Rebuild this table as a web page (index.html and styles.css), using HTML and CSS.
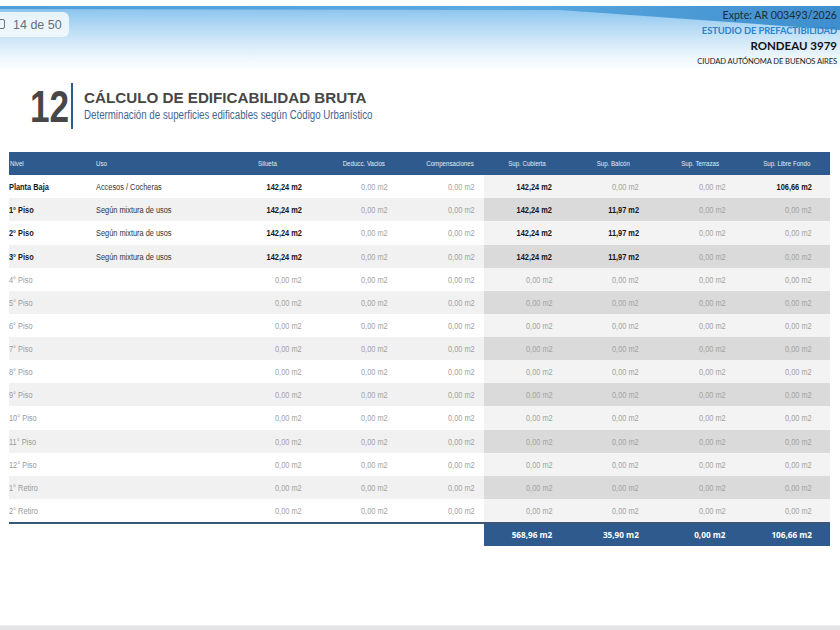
FILE: index.html
```html
<!DOCTYPE html>
<html lang="es">
<head>
<meta charset="utf-8">
<title>Cálculo de edificabilidad bruta</title>
<link rel="stylesheet" href="styles.css">
</head>
<body>
<div class="page">
  <header class="banner">
    <svg class="stripe" width="840" height="40" viewBox="0 0 840 40" aria-hidden="true">
      <defs>
        <linearGradient id="sg" x1="0" y1="0" x2="1" y2="0">
          <stop offset="0" stop-color="#4f9fd9"/>
          <stop offset="0.6" stop-color="#5aa8de"/>
          <stop offset="1" stop-color="#3f8fcf"/>
        </linearGradient>
      </defs>
      <polygon points="0,6 840,6 840,30 560,10 0,9" fill="url(#sg)"/>
    </svg>
    <div class="counter"><span class="counter-ico"></span>14 de 50</div>
    <div class="meta">
      <div class="expte">Expte: AR 003493/2026</div>
      <div class="estudio">ESTUDIO DE PREFACTIBILIDAD</div>
      <div class="addr">RONDEAU 3979</div>
      <div class="city">CIUDAD AUTÓNOMA DE BUENOS AIRES</div>
    </div>
  </header>

  <section class="title">
    <div class="num"><span>12</span></div>
    <div class="title-text">
      <h1>CÁLCULO DE EDIFICABILIDAD BRUTA</h1>
      <p><span>Determinación de superficies edificables según Código Urbanístico</span></p>
    </div>
  </section>

  <section class="table">
    <div class="row head">
      <div class="c l first"><span>Nivel</span></div>
      <div class="c l uso"><span>Uso</span></div>
      <div class="c h"><span>Silueta</span></div>
      <div class="c h sh"><span>Deducc. Vacios</span></div>
      <div class="c h sh"><span>Compensaciones</span></div>
      <div class="c h"><span>Sup. Cubierta</span></div>
      <div class="c h"><span>Sup. Balcón</span></div>
      <div class="c h"><span>Sup. Terrazas</span></div>
      <div class="c h"><span>Sup. Libre Fondo</span></div>
    </div>

    <div class="row">
      <div class="c l first b"><span>Planta Baja</span></div>
      <div class="c l uso"><span>Accesos / Cocheras</span></div>
      <div class="c v b"><span>142,24 m2</span></div>
      <div class="c v"><span>0,00 m2</span></div>
      <div class="c v"><span>0,00 m2</span></div>
      <div class="c v s b"><span>142,24 m2</span></div>
      <div class="c v s"><span>0,00 m2</span></div>
      <div class="c v s"><span>0,00 m2</span></div>
      <div class="c v s b"><span>106,66 m2</span></div>
    </div>
    <div class="row">
      <div class="c l first b"><span>1° Piso</span></div>
      <div class="c l uso"><span>Según mixtura de usos</span></div>
      <div class="c v b"><span>142,24 m2</span></div>
      <div class="c v"><span>0,00 m2</span></div>
      <div class="c v"><span>0,00 m2</span></div>
      <div class="c v s b"><span>142,24 m2</span></div>
      <div class="c v s b"><span>11,97 m2</span></div>
      <div class="c v s"><span>0,00 m2</span></div>
      <div class="c v s"><span>0,00 m2</span></div>
    </div>
    <div class="row">
      <div class="c l first b"><span>2° Piso</span></div>
      <div class="c l uso"><span>Según mixtura de usos</span></div>
      <div class="c v b"><span>142,24 m2</span></div>
      <div class="c v"><span>0,00 m2</span></div>
      <div class="c v"><span>0,00 m2</span></div>
      <div class="c v s b"><span>142,24 m2</span></div>
      <div class="c v s b"><span>11,97 m2</span></div>
      <div class="c v s"><span>0,00 m2</span></div>
      <div class="c v s"><span>0,00 m2</span></div>
    </div>
    <div class="row">
      <div class="c l first b"><span>3° Piso</span></div>
      <div class="c l uso"><span>Según mixtura de usos</span></div>
      <div class="c v b"><span>142,24 m2</span></div>
      <div class="c v"><span>0,00 m2</span></div>
      <div class="c v"><span>0,00 m2</span></div>
      <div class="c v s b"><span>142,24 m2</span></div>
      <div class="c v s b"><span>11,97 m2</span></div>
      <div class="c v s"><span>0,00 m2</span></div>
      <div class="c v s"><span>0,00 m2</span></div>
    </div>
    <div class="row">
      <div class="c l first m"><span>4° Piso</span></div><div class="c l uso"></div>
      <div class="c v"><span>0,00 m2</span></div><div class="c v"><span>0,00 m2</span></div><div class="c v"><span>0,00 m2</span></div>
      <div class="c v s"><span>0,00 m2</span></div><div class="c v s"><span>0,00 m2</span></div><div class="c v s"><span>0,00 m2</span></div><div class="c v s"><span>0,00 m2</span></div>
    </div>
    <div class="row">
      <div class="c l first m"><span>5° Piso</span></div><div class="c l uso"></div>
      <div class="c v"><span>0,00 m2</span></div><div class="c v"><span>0,00 m2</span></div><div class="c v"><span>0,00 m2</span></div>
      <div class="c v s"><span>0,00 m2</span></div><div class="c v s"><span>0,00 m2</span></div><div class="c v s"><span>0,00 m2</span></div><div class="c v s"><span>0,00 m2</span></div>
    </div>
    <div class="row">
      <div class="c l first m"><span>6° Piso</span></div><div class="c l uso"></div>
      <div class="c v"><span>0,00 m2</span></div><div class="c v"><span>0,00 m2</span></div><div class="c v"><span>0,00 m2</span></div>
      <div class="c v s"><span>0,00 m2</span></div><div class="c v s"><span>0,00 m2</span></div><div class="c v s"><span>0,00 m2</span></div><div class="c v s"><span>0,00 m2</span></div>
    </div>
    <div class="row">
      <div class="c l first m"><span>7° Piso</span></div><div class="c l uso"></div>
      <div class="c v"><span>0,00 m2</span></div><div class="c v"><span>0,00 m2</span></div><div class="c v"><span>0,00 m2</span></div>
      <div class="c v s"><span>0,00 m2</span></div><div class="c v s"><span>0,00 m2</span></div><div class="c v s"><span>0,00 m2</span></div><div class="c v s"><span>0,00 m2</span></div>
    </div>
    <div class="row">
      <div class="c l first m"><span>8° Piso</span></div><div class="c l uso"></div>
      <div class="c v"><span>0,00 m2</span></div><div class="c v"><span>0,00 m2</span></div><div class="c v"><span>0,00 m2</span></div>
      <div class="c v s"><span>0,00 m2</span></div><div class="c v s"><span>0,00 m2</span></div><div class="c v s"><span>0,00 m2</span></div><div class="c v s"><span>0,00 m2</span></div>
    </div>
    <div class="row">
      <div class="c l first m"><span>9° Piso</span></div><div class="c l uso"></div>
      <div class="c v"><span>0,00 m2</span></div><div class="c v"><span>0,00 m2</span></div><div class="c v"><span>0,00 m2</span></div>
      <div class="c v s"><span>0,00 m2</span></div><div class="c v s"><span>0,00 m2</span></div><div class="c v s"><span>0,00 m2</span></div><div class="c v s"><span>0,00 m2</span></div>
    </div>
    <div class="row">
      <div class="c l first m"><span>10° Piso</span></div><div class="c l uso"></div>
      <div class="c v"><span>0,00 m2</span></div><div class="c v"><span>0,00 m2</span></div><div class="c v"><span>0,00 m2</span></div>
      <div class="c v s"><span>0,00 m2</span></div><div class="c v s"><span>0,00 m2</span></div><div class="c v s"><span>0,00 m2</span></div><div class="c v s"><span>0,00 m2</span></div>
    </div>
    <div class="row">
      <div class="c l first m"><span>11° Piso</span></div><div class="c l uso"></div>
      <div class="c v"><span>0,00 m2</span></div><div class="c v"><span>0,00 m2</span></div><div class="c v"><span>0,00 m2</span></div>
      <div class="c v s"><span>0,00 m2</span></div><div class="c v s"><span>0,00 m2</span></div><div class="c v s"><span>0,00 m2</span></div><div class="c v s"><span>0,00 m2</span></div>
    </div>
    <div class="row">
      <div class="c l first m"><span>12° Piso</span></div><div class="c l uso"></div>
      <div class="c v"><span>0,00 m2</span></div><div class="c v"><span>0,00 m2</span></div><div class="c v"><span>0,00 m2</span></div>
      <div class="c v s"><span>0,00 m2</span></div><div class="c v s"><span>0,00 m2</span></div><div class="c v s"><span>0,00 m2</span></div><div class="c v s"><span>0,00 m2</span></div>
    </div>
    <div class="row">
      <div class="c l first m"><span>1° Retiro</span></div><div class="c l uso"></div>
      <div class="c v"><span>0,00 m2</span></div><div class="c v"><span>0,00 m2</span></div><div class="c v"><span>0,00 m2</span></div>
      <div class="c v s"><span>0,00 m2</span></div><div class="c v s"><span>0,00 m2</span></div><div class="c v s"><span>0,00 m2</span></div><div class="c v s"><span>0,00 m2</span></div>
    </div>
    <div class="row last">
      <div class="c l first m"><span>2° Retiro</span></div><div class="c l uso"></div>
      <div class="c v"><span>0,00 m2</span></div><div class="c v"><span>0,00 m2</span></div><div class="c v"><span>0,00 m2</span></div>
      <div class="c v s"><span>0,00 m2</span></div><div class="c v s"><span>0,00 m2</span></div><div class="c v s"><span>0,00 m2</span></div><div class="c v s"><span>0,00 m2</span></div>
    </div>

    <div class="row total">
      <div class="c blank"></div><div class="c blank"></div><div class="c blank"></div><div class="c blank"></div><div class="c blank"></div>
      <div class="c t">568,96 m2</div>
      <div class="c t">35,90 m2</div>
      <div class="c t">0,00 m2</div>
      <div class="c t">106,66 m2</div>
    </div>
  </section>

  <div class="spacer"></div>
  <footer class="bottom-bar"></footer>
</div>
</body>
</html>
```

FILE: styles.css
```css
* { box-sizing: border-box; }
html, body { margin: 0; padding: 0; background: #fff; }
body { width: 840px; height: 630px; overflow: hidden; font-family: "Liberation Sans", Arial, sans-serif; }

.page { display: flex; flex-direction: column; height: 630px; }

.banner {
  position: relative;
  height: 72px;
  background: linear-gradient(to bottom, #ffffff 0, #ffffff 6px, #8cc5ee 9px, #a9d4f3 22px, #cfe7f8 40px, #eef7fd 58px, #ffffff 72px);
  display: flex;
  justify-content: flex-end;
}
.stripe { position: absolute; left: 0; top: 0; }

.counter {
  position: absolute;
  left: 0; top: 12px;
  height: 25px;
  padding: 0 7px 0 13px;
  display: flex; align-items: center;
  background: rgba(246, 250, 253, 0.85);
  border-radius: 0 6px 6px 0;
  font-family: "Liberation Sans", Arial, sans-serif;
  font-size: 12.5px;
  color: #6b6f74;
}
.counter-ico {
  position: absolute; left: -3px; top: 7px;
  width: 8px; height: 10px;
  border: 1.3px solid #6b6f74;
  border-radius: 2px;
}

.meta {
  position: relative;
  display: flex; flex-direction: column; align-items: flex-end;
  padding: 8px 3px 0 0;
  font-family: Lato, "Open Sans", sans-serif;
}
.expte { font-size: 10.6px; color: #1f2a33; line-height: 15px; }
.estudio { font-size: 9.4px; color: #2c84c9; font-weight: 700; line-height: 15px; letter-spacing: -0.1px; }
.addr { font-size: 11.5px; font-weight: 700; color: #111; line-height: 16px; }
.city { font-size: 7.6px; color: #222; line-height: 14px; letter-spacing: -0.1px; }

.title { display: flex; align-items: stretch; margin: 11px 0 0 30px; height: 46px; }
.num { width: 41px; font-weight: 700; font-size: 44px; color: #474747; line-height: 48px; }
.num span { display: inline-block; transform: scaleX(0.8); transform-origin: left center; }
.title-text { border-left: 2px solid #2e5a8d; padding-left: 11px; }
.title-text h1 { margin: 6px 0 0; font-size: 15.2px; font-weight: 700; color: #464646; line-height: 17px; }
.title-text p { margin: 2px 0 0; font-size: 12px; color: #3f6592; line-height: 15px; }
.title-text p span { display: inline-block; transform: scaleX(0.81); transform-origin: left center; }

.table { margin: 23px 0 0 9px; width: 821px; }
.row { display: grid; grid-template-columns: 78px 137px repeat(7, 1fr); height: 23.13px; }
.row .c { display: flex; align-items: center; font-size: 9.6px; color: #a2a2a2; white-space: nowrap; }
.row .c span { display: inline-block; transform: scaleX(0.77); }
.row .l { justify-content: flex-start; color: #333; }
.row .l span { transform-origin: left center; }
.row .first { padding-left: 0; }
.row .uso { padding-left: 9px; }
.row .v { justify-content: flex-end; padding-right: 9px; }
.row .v span { transform-origin: right center; }
.row .v.s { padding-right: 18px; background: #f3f3f3; }
.row:nth-child(odd) .c { background: #f1f1f1; }
.row:nth-child(odd) .c.s { background: #dadada; }
.row .b { font-weight: 700; color: #151515; }
.row .m { color: #9a9a9a; }

.row.head .c { background: #2e5a8d; color: #e3ebf5; font-size: 7.5px; justify-content: center; }
.row.head .c span { transform: scaleX(0.82); transform-origin: center; }
.row.head .c.l { justify-content: flex-start; }
.row.head .c.l span { transform-origin: left center; }
.row.head .c.first { padding-left: 1px; }
.row.head .c.sh { padding-left: 20px; }
.row.last { border-bottom: 2px solid #3b5676; height: 25px; }

.row.total { height: 22px; }
.row.total .c { background: transparent; }
.row.total .c.t { background: #2e5a8d; color: #fff; font-weight: 700; font-family: "Open Sans", sans-serif; font-size: 8.2px; justify-content: flex-end; padding-right: 18px; }

.spacer { flex: 1; }
.bottom-bar { height: 5px; background: #e4e4e6; border-top: 1px solid #eeeef0; }
```
